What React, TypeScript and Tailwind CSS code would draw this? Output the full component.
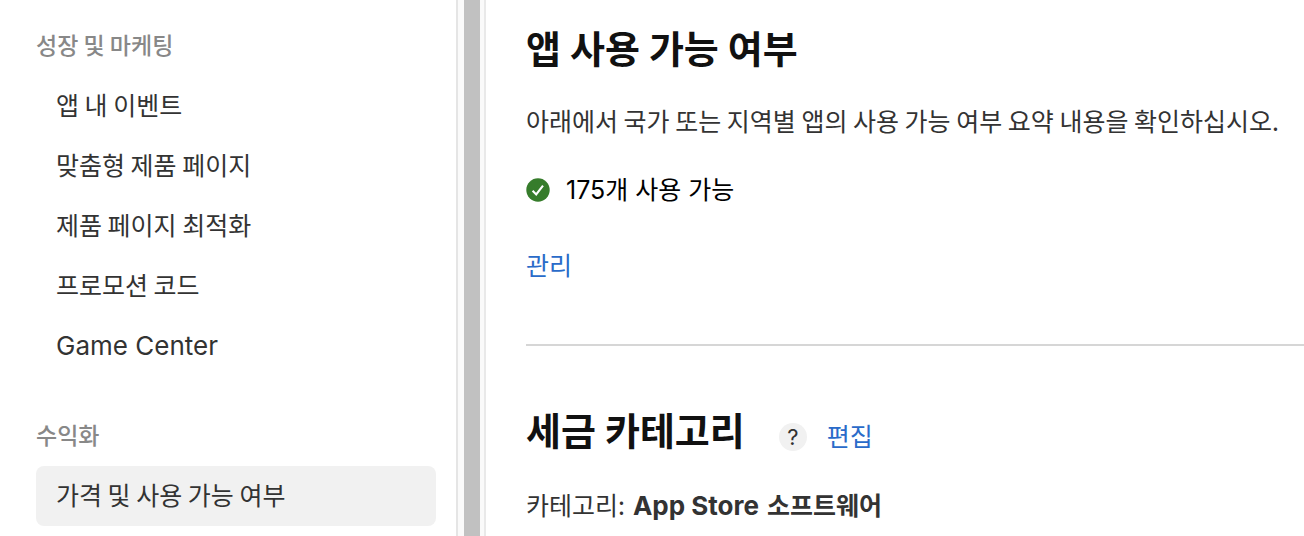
import React from "react";

const growthLinks = ["앱 내 이벤트", "맞춤형 제품 페이지", "제품 페이지 최적화", "프로모션 코드"];

function NavLink({ label, active = false, latin = false }: { label: string; active?: boolean; latin?: boolean }) {
  return (
    <li>
      <a
        href="#"
        aria-current={active ? "page" : undefined}
        className={`block h-[60px] rounded-lg px-5 ${active ? "bg-[#f1f1f1]" : ""} ${latin ? "pt-3 font-['Inter',sans-serif] text-[26px]" : "pt-2.5"}`}
      >
        {label}
      </a>
    </li>
  );
}

function Heading({ children }: { children: React.ReactNode }) {
  return (
    <h1 className="font-['Inter','Noto_Sans_CJK_KR',sans-serif] text-[38px] font-bold leading-[50px] text-[#111111]">
      {children}
    </h1>
  );
}

export default function App() {
  return (
    <div className="flex h-screen overflow-hidden bg-white font-['Noto_Sans_CJK_KR',sans-serif] text-[25px] leading-9 text-[#333333]">
      <nav className="w-[458px] shrink-0 border-r-2 border-[#e5e5e5] pl-9 pr-5 pt-[26px]">
        <h2 className="text-[23px] font-medium text-[#888888]">성장 및 마케팅</h2>
        <ul className="pt-3.5">
          {growthLinks.map((label) => (
            <NavLink key={label} label={label} />
          ))}
          <NavLink label="Game Center" latin />
        </ul>
        <h2 className="pt-10 text-[23px] font-medium text-[#888888]">수익화</h2>
        <ul className="pt-3.5">
          <NavLink label="가격 및 사용 가능 여부" active />
        </ul>
      </nav>
      <div className="w-[26px] shrink-0 border-l-[6px] border-r-4 border-[#fafafa] bg-[#c1c1c1]" />
      <main className="min-w-0 grow border-l-2 border-[#e9e9e9] pl-10">
        <section className="border-b-2 border-[#d6d6d6] pb-[62px] pt-6">
          <Heading>앱 사용 가능 여부</Heading>
          <p className="whitespace-nowrap pt-7">아래에서 국가 또는 지역별 앱의 사용 가능 여부 요약 내용을 확인하십시오.</p>
          <p className="flex items-center gap-4 pt-[34px] font-['Inter','Noto_Sans_CJK_KR',sans-serif] text-black">
            <svg viewBox="0 0 24 24" className="size-6" aria-hidden="true">
              <circle cx="12" cy="12" r="11.7" fill="#367c2b" />
              <path d="M6.6 12.8 10.2 16.4 17 7.6" fill="none" stroke="white" strokeWidth="2.1" strokeLinejoin="miter" />
            </svg>
            175개 사용 가능
          </p>
          <a href="#" className="mt-[38px] inline-block text-[#2a6bc9]">관리</a>
        </section>
        <section className="pt-[60px]">
          <div className="flex items-center">
            <Heading>세금 카테고리</Heading>
            <button type="button" aria-label="도움말" className="ml-[34px] mt-3 flex size-7 items-center justify-center rounded-full bg-[#f1f1f1] font-['Inter',sans-serif] text-[22px] leading-7">?</button>
            <a href="#" className="ml-5 mt-2 text-[#2a6bc9]">편집</a>
          </div>
          <p className="flex items-baseline gap-2 pt-[30px]">
            <span>카테고리:</span>
            <strong className="flex items-baseline gap-2 font-bold">
              <span className="font-['Inter',sans-serif] text-[26px]">App Store</span>
              <span>소프트웨어</span>
            </strong>
          </p>
        </section>
      </main>
    </div>
  );
}
